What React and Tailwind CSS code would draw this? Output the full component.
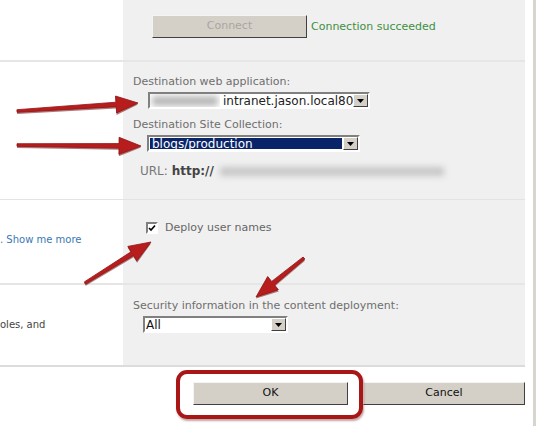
import React from "react";

function arrowPoints(tx, ty, hx, hy, shaft, headLen, headW) {
  const dx = hx - tx, dy = hy - ty;
  const len = Math.hypot(dx, dy);
  const ux = dx / len, uy = dy / len;
  const px = -uy, py = ux;
  const bx = hx - ux * headLen, by = hy - uy * headLen;
  const s = shaft / 2, h = headW / 2;
  const pts = [
    [tx + px * s * 0.6, ty + py * s * 0.6],
    [bx + px * s, by + py * s],
    [bx + px * h, by + py * h],
    [hx, hy],
    [bx - px * h, by - py * h],
    [bx - px * s, by - py * s],
    [tx - px * s * 0.6, ty - py * s * 0.6],
  ];
  return pts.map((p) => p[0].toFixed(1) + "," + p[1].toFixed(1)).join(" ");
}

function Arrow({ t, h }) {
  return (
    <g>
      <polygon
        points={arrowPoints(t[0], t[1] + 1.5, h[0], h[1] + 1.5, 5, 22, 18)}
        fill="#6e0b0b"
        opacity="0.55"
      />
      <polygon points={arrowPoints(t[0], t[1], h[0], h[1], 4.5, 22, 17)} fill="#b81d1d" stroke="#8e1212" strokeWidth="0.8" />
    </g>
  );
}

function DropBtn() {
  return (
    <div className="w-[15px] h-full bg-[#d4d0c8] border border-t-white border-l-white border-b-[#404040] border-r-[#404040] flex items-center justify-center">
      <svg width="7" height="4" viewBox="0 0 7 4">
        <polygon points="0,0 7,0 3.5,4" fill="#000" />
      </svg>
    </div>
  );
}

export default function App() {
  const font = { fontFamily: '"DejaVu Sans", Verdana, sans-serif' };
  return (
    <div className="relative w-[540px] h-[426px] bg-white overflow-hidden flex text-[11px]" style={font}>
      <div className="w-[525px] flex flex-col">
        {/* Row 1 */}
        <div className="h-[62px] flex border-b-2 border-[#e6e6e6]">
          <div className="w-[123px] bg-white" />
          <div className="flex-1 bg-[#f0f0f0] flex items-start pt-[15px] pl-[29px]">
            <div className="w-[155px] h-[23px] bg-[#d4d0c8] border border-t-[#f4f4f4] border-l-[#f4f4f4] border-b-[#404040] border-r-[#404040] flex items-center justify-center text-[#a8a6a0]" style={{ fontFamily: '"DejaVu Sans", Tahoma, sans-serif' }}>
              Connect
            </div>
            <span className="ml-[4px] mt-[4px] text-[11px] text-[#3f8f3f]">Connection succeeded</span>
          </div>
        </div>
        {/* Row 2 */}
        <div className="h-[138px] flex border-b border-[#e3e3e3]">
          <div className="w-[123px] bg-white" />
          <div className="flex-1 bg-[#f0f0f0] flex flex-col pl-[10px] pt-[13px]">
            <div className="text-[#6e6e6e] leading-[14px]">Destination web application:</div>
            <div className="ml-[15px] mt-[3px] w-[222px] h-[17px] bg-white border-2 border-t-[#808080] border-l-[#808080] border-b-white border-r-white flex items-stretch">
              <div className="w-[72px] relative overflow-hidden">
                <div className="absolute left-[2px] top-[2px] w-[66px] h-[10px] bg-[#b8b8b8] blur-[3px]" />
              </div>
              <div className="flex-1 flex items-center text-[12px] text-[#222] leading-none pl-[3px]">intranet.jason.local80</div>
              <DropBtn />
            </div>
            <div className="text-[#6e6e6e] leading-[14px] mt-[9px]">Destination Site Collection:</div>
            <div className="ml-[14px] mt-[3px] w-[213px] h-[17px] bg-white border-2 border-t-[#808080] border-l-[#808080] border-b-white border-r-white flex items-stretch">
              <div className="flex-1 bg-[#0a246a] flex items-center text-[12px] text-white leading-none pl-[2px] m-[1px]">blogs/production</div>
              <DropBtn />
            </div>
            <div className="ml-[7px] mt-[10px] flex items-center text-[12px]">
              <span className="text-[#777]">URL:&nbsp;</span>
              <span className="font-bold text-[#444]">http://</span>
              <div className="relative w-[232px] h-[14px] ml-[2px]">
                <div className="absolute left-[4px] top-[3px] w-[224px] h-[9px] bg-[#c6c6c6] blur-[3px]" />
              </div>
            </div>
          </div>
        </div>
        {/* Row 3 */}
        <div className="h-[85px] flex border-b-2 border-[#e6e6e6]">
          <div className="w-[123px] bg-white pt-[32px]">
            <span className="text-[#3a78b4] text-[10px]">. Show me more</span>
          </div>
          <div className="flex-1 bg-[#f0f0f0] pl-[23px] pt-[22px] flex items-start">
            <div className="w-[12px] h-[12px] bg-white border-2 border-t-[#808080] border-l-[#808080] border-b-white border-r-white flex items-center justify-center">
              <svg width="8" height="8" viewBox="0 0 8 8">
                <polyline points="1,4 3,6 7,1.5" fill="none" stroke="#000" strokeWidth="1.6" />
              </svg>
            </div>
            <span className="ml-[7px] text-[#666] text-[11px] leading-[12px]">Deploy user names</span>
          </div>
        </div>
        {/* Row 4 */}
        <div className="h-[82px] flex border-b-2 border-[#dcdcdc]">
          <div className="w-[123px] bg-white pt-[32px]">
            <span className="text-[#444] text-[10px]">oles, and</span>
          </div>
          <div className="flex-1 bg-[#f0f0f0] flex flex-col pl-[10px] pt-[14px]">
            <div className="text-[#6e6e6e] leading-[14px]">Security information in the content deployment:</div>
            <div className="ml-[10px] mt-[3px] w-[145px] h-[17px] bg-white border-2 border-t-[#808080] border-l-[#808080] border-b-white border-r-white flex items-stretch">
              <div className="flex-1 flex items-center text-[12px] text-[#111] leading-none pl-[1px]">All</div>
              <DropBtn />
            </div>
          </div>
        </div>
        {/* Buttons */}
        <div className="flex pt-[15px] pl-[193px] gap-[15px]" style={{ fontFamily: '"DejaVu Sans", Tahoma, sans-serif' }}>
          <div className="w-[155px] h-[23px] bg-[#d4d0c8] border border-t-[#f4f4f4] border-l-[#f4f4f4] border-b-[#404040] border-r-[#404040] flex items-center justify-center text-[#111]">OK</div>
          <div className="w-[162px] h-[23px] bg-[#d4d0c8] border border-t-[#f4f4f4] border-l-[#f4f4f4] border-b-[#404040] border-r-[#404040] flex items-center justify-center text-[#111]">Cancel</div>
        </div>
      </div>
      {/* right scrollbar edge */}
      <div className="w-[15px] flex">
        <div className="w-[8px]" />
        <div className="w-[3px] bg-[#d8d5d0]" />
        <div className="flex-1" />
      </div>

      {/* Annotations */}
      <div className="absolute left-[176px] top-[370px] w-[187px] h-[49px] rounded-[11px] border-[4px] border-[#a81616] shadow-[1px_2px_2px_rgba(80,0,0,0.35)]" />
      <svg className="absolute left-0 top-0" width="540" height="426" viewBox="0 0 540 426">
        <Arrow t={[17, 111]} h={[138, 103]} />
        <Arrow t={[17, 145]} h={[141, 146]} />
        <Arrow t={[85, 283]} h={[151, 242]} />
        <Arrow t={[304, 258]} h={[256, 297]} />
      </svg>
    </div>
  );
}
